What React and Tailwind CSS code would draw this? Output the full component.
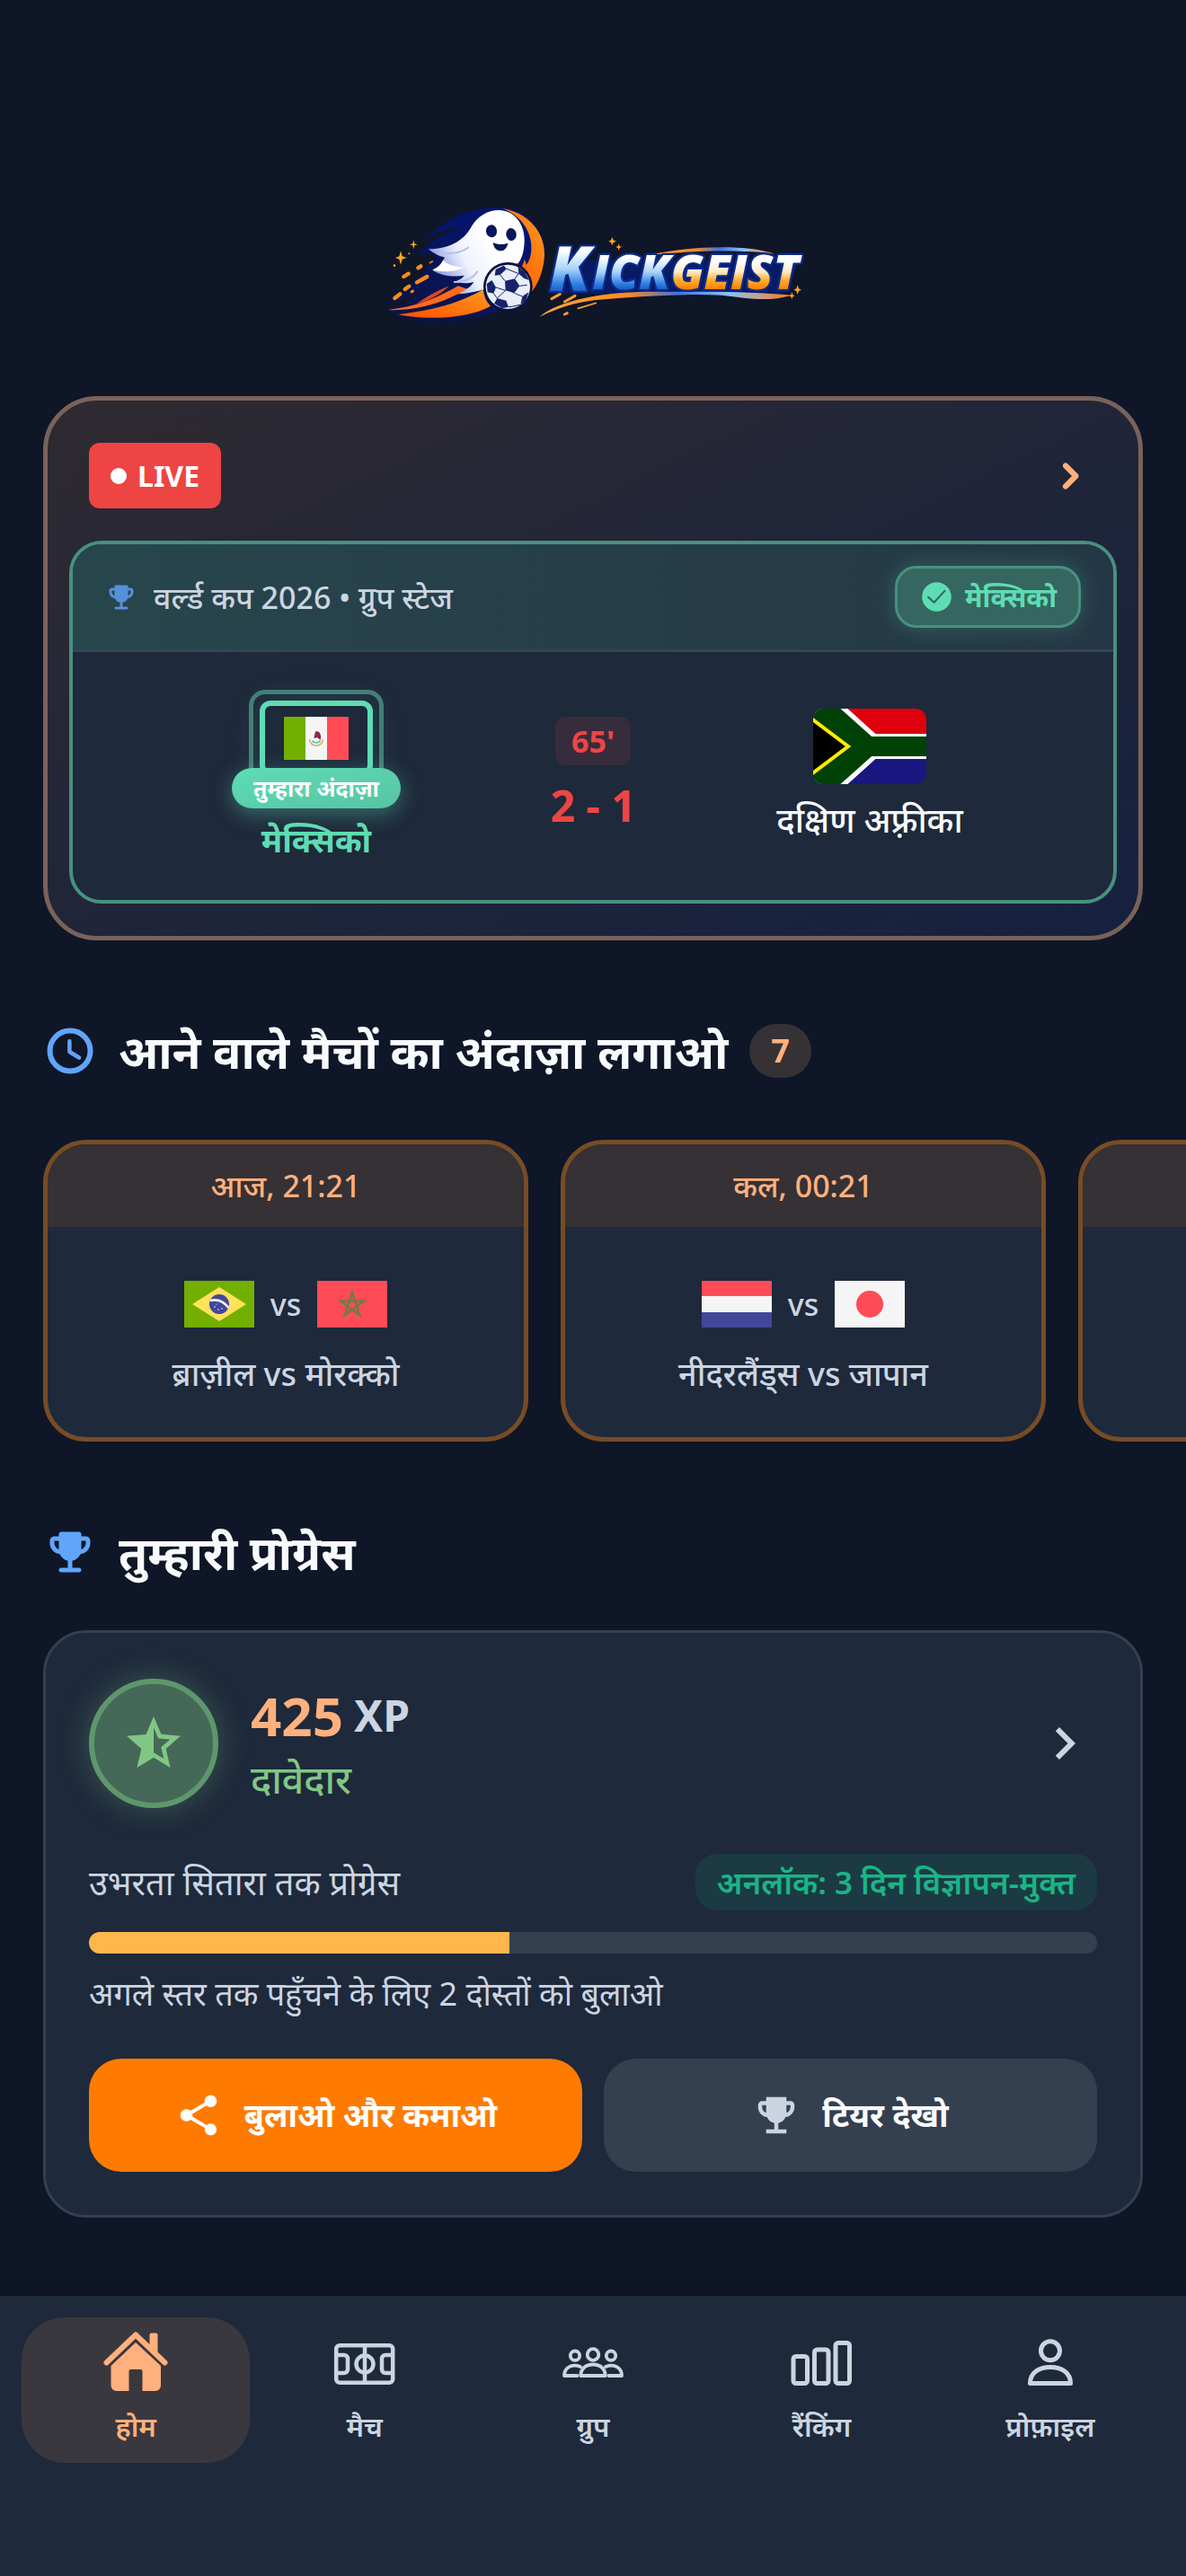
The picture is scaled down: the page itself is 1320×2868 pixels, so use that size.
import React, { useState } from 'react';
import { MdChevronRight, MdEmojiEvents, MdShare, MdStarHalf } from 'react-icons/md';

function Logo() {
  return (
    <svg viewBox="0 0 1500 510" className="w-[500px] h-[170px]" role="img" aria-label="Kickgeist">
      <defs>
        <linearGradient id="swoosh" x1="0" y1="1" x2="1" y2="0">
          <stop offset="0" stopColor="#ff4d00" />
          <stop offset="1" stopColor="#ff9d1c" />
        </linearGradient>
        <linearGradient id="navy" x1="0" y1="1" x2="1" y2="0">
          <stop offset="0" stopColor="#0b1440" />
          <stop offset="1" stopColor="#03157c" />
        </linearGradient>
        <linearGradient id="ghost" x1="0" y1="0.6" x2="0.6" y2="0.3">
          <stop offset="0" stopColor="#7f93d8" />
          <stop offset="0.5" stopColor="#eef2ff" />
          <stop offset="1" stopColor="#ffffff" />
        </linearGradient>
        <linearGradient id="blueLetters" x1="0" y1="0" x2="0" y2="1">
          <stop offset="0.3" stopColor="#ffffff" />
          <stop offset="0.52" stopColor="#a9d3fb" />
          <stop offset="0.7" stopColor="#2f80e4" />
          <stop offset="0.85" stopColor="#1746a8" />
        </linearGradient>
        <linearGradient id="orangeLetters" x1="0" y1="0" x2="0" y2="1">
          <stop offset="0.35" stopColor="#ffffff" />
          <stop offset="0.52" stopColor="#ffe9c2" />
          <stop offset="0.64" stopColor="#ffb02e" />
          <stop offset="0.8" stopColor="#ff7a00" />
        </linearGradient>
        <linearGradient id="streak" x1="0" y1="0" x2="1" y2="0">
          <stop offset="0" stopColor="#f6a54b" />
          <stop offset="0.35" stopColor="#ff8a1c" />
          <stop offset="0.55" stopColor="#3f74e0" />
          <stop offset="0.75" stopColor="#8cc4f7" />
          <stop offset="1" stopColor="#ff7a1a" />
        </linearGradient>
      </defs>

      {/* trails */}
      <path d="M440 64 C320 62 250 110 190 170 C250 140 270 130 300 128 C220 170 190 190 165 222 L230 215 C180 300 110 350 40 388 C100 380 150 360 200 330 C150 370 110 392 62 404 C120 450 250 470 420 412 C380 440 330 450 250 460 C420 462 560 330 588 220 C588 120 510 66 440 64Z" fill="url(#navy)" />
      <path d="M448 66 C540 82 590 150 588 225 C584 280 565 320 545 345 C545 310 540 285 520 262 C560 230 560 110 448 66Z" fill="url(#swoosh)" />
      <path d="M512 262 L522 236 L536 280Z" fill="#ff6a00" />
      <path d="M385 335 C320 375 230 405 100 420 C190 442 340 432 408 392 C388 372 384 350 385 335Z" fill="url(#swoosh)" />
      <path d="M300 325 C230 365 160 395 66 405 C150 410 250 385 330 335Z" fill="#ff6a1a" />
      <path d="M270 325 C220 345 190 365 160 385 C200 375 240 355 270 325Z" fill="#e0451c" />
      <g stroke="#ff8a1c" strokeWidth="13" strokeLinecap="round">
        <path d="M118 294 L134 284" /><path d="M166 265 L175 259" /><path d="M162 313 L196 294" />
        <path d="M122 336 L136 326" /><path d="M88 366 L106 352" />
        <path d="M144 345 L149 342" strokeWidth="8" /><path d="M205 248 L214 243" strokeWidth="5" />
      </g>

      {/* ghost */}
      <path d="M440 72 C490 75 522 120 521 175 C520 215 510 238 500 250 C440 260 400 290 388 335 C360 345 330 350 300 352 C330 335 345 325 352 312 C330 318 310 316 285 312 C300 306 315 300 320 290 C290 296 240 292 214 272 C235 262 245 250 255 230 C230 225 215 212 200 202 C270 200 320 175 345 125 C365 92 400 70 440 72Z" fill="url(#ghost)" />
      <path d="M214 272 C250 280 290 280 320 262 C290 262 262 256 250 238 C242 256 230 264 214 272Z" fill="#ffffff" />
      <path d="M285 312 C320 312 350 300 365 275 M240 214 C280 220 310 215 335 195" stroke="#b4c0e8" strokeWidth="6" fill="none" />
      <ellipse cx="411" cy="142" rx="18" ry="21" fill="#0b1559" transform="rotate(-8 411 142)" />
      <ellipse cx="477" cy="153" rx="17" ry="21" fill="#0b1559" transform="rotate(-8 477 153)" />
      <path d="M416 180 C432 188 450 188 466 182 C460 218 420 216 416 180Z" fill="#0b1559" />

      {/* ball */}
      <circle cx="466" cy="328" r="82" fill="#0a1242" />
      <circle cx="466" cy="328" r="74" fill="#e9eef9" />
      <g fill="#14236b">
        <path d="M456 308 L489 301 L505 325 L487 349 L458 340Z" />
        <path d="M425 270 L452 257 L462 268 L440 288 L422 290Z" />
        <path d="M500 262 L522 278 L536 305 L520 300 L502 284Z" />
        <path d="M395 318 L412 306 L426 330 L418 350 L398 346Z" />
        <path d="M430 366 L460 374 L468 396 L446 399 L420 384Z" />
        <path d="M514 360 L535 346 L526 374 L508 388Z" />
      </g>
      <path d="M440 288 L456 308 M502 284 L489 301 M505 325 L530 322 M487 349 L514 360 M458 340 L430 366 M426 330 L458 340 M462 268 L502 284 M418 350 L430 366 M468 396 L508 388" stroke="#14236b" strokeWidth="3" />

      {/* sparkles */}
      <g fill="#ffa51e">
        <path d="M108 208 L113 226 L128 231 L113 236 L108 254 L103 236 L90 231 L103 226Z" />
        <path d="M151 172 L154 184 L164 187 L154 190 L151 202 L148 190 L138 187 L148 184Z" />
        <circle cx="87" cy="257" r="4" /><circle cx="136" cy="217" r="3" />
        <path d="M814 162 L818 172 L828 176 L818 180 L814 190 L810 180 L802 176 L810 172Z" />
        <path d="M836 184 L839 192 L846 195 L839 198 L836 206 L833 198 L826 195 L833 192Z" />
        <path d="M1433 322 L1437 334 L1446 338 L1437 342 L1433 354 L1429 342 L1420 338 L1429 334Z" />
        <path d="M1414 346 L1417 355 L1424 358 L1417 361 L1414 370 L1411 361 L1404 358 L1411 355Z" />
      </g>

      {/* wordmark */}
      <path d="M650 240 L1440 240 L1390 350 L610 352Z" fill="#071a63" />
      <path d="M940 222 C1080 190 1260 185 1360 218 C1260 204 1080 206 940 222Z" fill="url(#streak)" />
      <path d="M572 428 C640 370 800 340 1000 345 C1150 342 1300 345 1415 356 C1330 380 1270 366 1180 356 C1040 350 900 360 760 372 C690 380 630 400 572 428Z" fill="url(#streak)" />
      <g stroke="#ff9a2a" strokeWidth="9" strokeLinecap="round">
        <path d="M612 368 L640 352" /><path d="M655 378 L690 358" /><path d="M655 420 L664 416" /><path d="M700 400 L760 382" strokeWidth="5" />
      </g>
      <g fontFamily="'Open Sans', 'Noto Sans', sans-serif" fontWeight="800" fontStyle="italic" stroke="#0c2a8c" strokeWidth="14" strokeLinejoin="round" paintOrder="stroke">
        <text x="604" y="342" fontSize="206" fill="url(#blueLetters)">K</text>
        <text x="748" y="336" fontSize="158" fill="url(#blueLetters)">ICK</text>
        <text x="1010" y="336" fontSize="158" fill="url(#orangeLetters)">GEIST</text>
      </g>
    </svg>
  );
}

function TrophyRounded({ className }) {
  return (
    <svg viewBox="0 0 24 24" fill="currentColor" className={className}>
      <path d="M19 5h-2V4c0-.55-.45-1-1-1H8c-.55 0-1 .45-1 1v1H5c-1.1 0-2 .9-2 2v1c0 2.55 1.92 4.63 4.39 4.94.63 1.5 1.98 2.63 3.61 2.96V19H8c-.55 0-1 .45-1 1s.45 1 1 1h8c.55 0 1-.45 1-1s-.45-1-1-1h-3v-3.1c1.63-.33 2.98-1.46 3.61-2.96C19.08 12.63 21 10.55 21 8V7c0-1.1-.9-2-2-2zM5 8V7h2v3.82C5.84 10.4 5 9.3 5 8zm14 0c0 1.3-.84 2.4-2 2.82V7h2v1z" />
    </svg>
  );
}

function ClockIcon({ className }) {
  return (
    <svg viewBox="0 0 24 24" fill="none" stroke="currentColor" className={className}>
      <circle cx="12" cy="12" r="9" strokeWidth="2.4" />
      <path d="M11.75 7.7v4.7l4.25 2.600" strokeWidth="1.8" strokeLinecap="round" strokeLinejoin="round" />
    </svg>
  );
}

function CheckBadge({ className }) {
  return (
    <svg viewBox="0 0 24 24" className={className}>
      <circle cx="12" cy="12" r="10" fill="currentColor" />
      <path d="M6.2 12.2l4 3.7 7.3-8" fill="none" stroke="#35665f" strokeWidth="1.3" strokeLinecap="round" strokeLinejoin="round" />
    </svg>
  );
}

function Flag({ code, className }) {
  return (
    <svg viewBox="0 0 78 52" preserveAspectRatio="none" className={className}>
      {code === 'mx' && (
        <>
          <rect width="78" height="52" fill="#f5f5f5" />
          <rect width="26" height="52" fill="#73af00" />
          <rect x="52" width="26" height="52" fill="#ff4b55" />
          <path d="M31 27a8 8 0 0 0 16 0" fill="none" stroke="#c9b44a" strokeWidth="1.6" />
          <path d="M34 29c3 3 7 3 10 0" fill="none" stroke="#5cc4c9" strokeWidth="2" />
          <path d="M38 18c4-2 8 3 6 10l-4-3-4 1 1-4z" fill="#8a2846" />
        </>
      )}
      {code === 'br' && (
        <>
          <rect width="78" height="52" fill="#73af00" />
          <path d="M39 7L69 26 39 45 9 26z" fill="#ffe15a" />
          <circle cx="39" cy="26" r="11" fill="#41479b" />
          <path d="M29 22c8-2 15 1 20.5 8" fill="none" stroke="#f5f5f5" strokeWidth="2.5" />
          <g fill="#f5f5f5">
            <circle cx="34" cy="29" r="0.8" /><circle cx="38" cy="32" r="0.8" /><circle cx="42" cy="31" r="0.8" /><circle cx="36" cy="26" r="0.6" />
          </g>
        </>
      )}
      {code === 'ma' && (
        <>
          <rect width="78" height="52" fill="#ff4b55" />
          <path d="M39 13l8.2 25L26 22.500h26L30.800 38z" fill="none" stroke="#73794a" strokeWidth="2.6" />
        </>
      )}
      {code === 'nl' && (
        <>
          <rect width="78" height="52" fill="#f5f5f5" />
          <rect width="78" height="17" fill="#ff4b55" />
          <rect y="35" width="78" height="17" fill="#41479b" />
        </>
      )}
      {code === 'jp' && (
        <>
          <rect width="78" height="52" fill="#f5f5f5" />
          <circle cx="39" cy="26" r="15" fill="#ff4b55" />
        </>
      )}
    </svg>
  );
}

function SouthAfricaFlag() {
  return (
    <svg viewBox="0 0 126 84" className="w-[126px] h-[84px] rounded-xl">
      <rect width="126" height="42" fill="#de000a" />
      <rect y="42" width="126" height="42" fill="#1a1880" />
      <path d="M0-16L64 42 0 100M64 42h62" fill="none" stroke="#fff" strokeWidth="28" />
      <path d="M-4-16L61 42-4 100M61 42h65" fill="none" stroke="#004106" strokeWidth="22" />
      <path d="M0-14L20 0 64 36v12L20 84 0 98z" fill="#004106" />
      <path d="M-2 11L39 42-2 73z" fill="#000" stroke="#ffec00" strokeWidth="4" />
    </svg>
  );
}

function HomeIcon() {
  return (
    <svg viewBox="0 0 72 72" className="size-[72px]">
      <path d="M3.5 35.5L36 4.5l32.5 31" fill="none" stroke="currentColor" strokeWidth="6" strokeLinecap="round" strokeLinejoin="round" />
      <path d="M51.5 17V4.5a2 2 0 0 1 2-2h5a2 2 0 0 1 2 2v21z" fill="currentColor" />
      <path d="M36 13L64 39v22a6 6 0 0 1-6 6H43.5V45a2 2 0 0 0-2-2h-11a2 2 0 0 0-2 2v22H14.5a6 6 0 0 1-6-6V39z" fill="currentColor" />
    </svg>
  );
}

function PitchIcon() {
  return (
    <svg viewBox="0 0 72 72" className="size-[72px]" fill="none" stroke="currentColor" strokeWidth="4.5">
      <rect x="4.2" y="16.2" width="63" height="41.6" rx="4" />
      <path d="M36 16v42" />
      <circle cx="36" cy="37" r="9.5" />
      <path d="M4 27h9a4 4 0 0 1 4 4v12a4 4 0 0 1-4 4H4M68 27h-9a4 4 0 0 0-4 4v12a4 4 0 0 0 4 4h9" />
    </svg>
  );
}

function GroupIcon() {
  return (
    <svg viewBox="0 0 72 72" className="size-[72px]" fill="none" stroke="currentColor" strokeWidth="3.8" strokeLinecap="round" strokeLinejoin="round">
      <circle cx="36" cy="26.5" r="6.3" />
      <circle cx="16" cy="27.7" r="5.2" />
      <circle cx="56" cy="27.7" r="5.2" />
      <path d="M22.3 50c0-8 6-12.5 13.7-12.5S49.7 42 49.7 50z" />
      <path d="M18.500 50H4c0-8 7-14 18-10M53.5 50H68c0-8-7-14-18-10" />
    </svg>
  );
}

function RankingIcon() {
  return (
    <svg viewBox="0 0 72 72" className="size-[72px]" fill="none" stroke="currentColor" strokeWidth="5">
      <rect x="5" y="28.5" width="15.5" height="30" rx="3" />
      <rect x="28.500" y="21" width="15.5" height="37.5" rx="3" />
      <rect x="52" y="13.5" width="15.5" height="45" rx="3" />
    </svg>
  );
}

function ProfileIcon() {
  return (
    <svg viewBox="0 0 72 72" className="size-[72px]" fill="none" stroke="currentColor" strokeWidth="5" strokeLinejoin="round">
      <circle cx="36" cy="22.3" r="10.5" />
      <path d="M13.5 58.5c0-12 10-18 22.5-18s22.5 6 22.5 18z" />
    </svg>
  );
}

const matches = [
  { time: 'आज, 21:21', home: 'br', away: 'ma', label: 'ब्राज़ील vs मोरक्को' },
  { time: 'कल, 00:21', home: 'nl', away: 'jp', label: 'नीदरलैंड्स vs जापान' },
];

const tabs = [
  { id: 'home', label: 'होम', Icon: HomeIcon },
  { id: 'matches', label: 'मैच', Icon: PitchIcon },
  { id: 'groups', label: 'ग्रुप', Icon: GroupIcon },
  { id: 'ranking', label: 'रैंकिंग', Icon: RankingIcon },
  { id: 'profile', label: 'प्रोफ़ाइल', Icon: ProfileIcon },
];

function LiveMatch() {
  return (
    <section className="mx-12 rounded-[60px] border-5 border-[#7a6259] bg-linear-to-br from-[#2f2a31] via-[#202539] to-[#16213f] px-6 pt-[47px] pb-9">
      <div className="flex items-center justify-between px-[22px]">
        <span className="flex h-[73px] items-center gap-3 rounded-xl bg-[#ef4444] px-6 text-[32px] font-bold text-white">
          <span className="size-[18px] rounded-full bg-white" />
          LIVE
        </span>
        <button type="button" className="text-[#ffb07c]">
          <svg viewBox="0 0 24 24" fill="currentColor" stroke="currentColor" strokeWidth="0.5" className="size-[60px]">
            <path d="M9.29 6.71c-.39.39-.39 1.02 0 1.41L13.17 12l-3.88 3.88c-.39.39-.39 1.02 0 1.41.39.39 1.02.39 1.41 0l4.59-4.59c.39-.39.39-1.02 0-1.41L10.7 6.7c-.38-.38-1.02-.38-1.41.01z" />
          </svg>
        </button>
      </div>

      <div className="mt-9 overflow-hidden rounded-[36px] border-4 border-[#47917f] bg-[#1e293b]">
        <div className="flex items-center justify-between border-b-3 border-[#334652] bg-linear-to-r from-[#27464c] to-[#253746] px-9 py-6">
          <div className="flex items-center gap-[18px] text-[34px] leading-[48px] font-medium text-[#cbd5e1]">
            <TrophyRounded className="size-9 text-[#5590d9]" />
            वर्ल्ड कप 2026 • ग्रुप स्टेज
          </div>
          <span className="flex h-[69px] items-center gap-3 rounded-3xl border-3 border-[#47917f] bg-[#35665f] px-6 text-[30px] font-bold text-[#5edcb3] shadow-[0_0_24px_#5edcb340]">
            <CheckBadge className="size-[39px]" />
            मेक्सिको
          </span>
        </div>

        <div className="flex items-center px-9 py-[39px]">
          <div className="flex flex-1 flex-col items-center pt-[15px]">
            <div className="relative flex h-[84px] w-[126px] items-center justify-center rounded-xl border-6 border-[#5edcb3] shadow-[0_0_36px_#5edcb326]">
              <div className="absolute -inset-[18px] rounded-[18px] border-5 border-[#427f76]" />
              <Flag code="mx" className="h-12 w-[72px]" />
              <span className="absolute top-[69px] rounded-3xl bg-linear-to-br from-[#5edcb3] to-[#57c4a4] px-6 text-[25px] leading-[45px] font-bold whitespace-nowrap text-white shadow-[0_6px_24px_#5edcb366]">
                तुम्हारा अंदाज़ा
              </span>
            </div>
            <p className="mt-[45px] text-4xl leading-[54px] font-bold text-[#5edcb3]">मेक्सिको</p>
          </div>

          <div className="flex w-[146px] flex-col items-center gap-3 font-bold text-[#ef4444]">
            <span className="rounded-xl bg-[#ef4444]/12 px-[18px] text-[34px] leading-[54px]">65'</span>
            <span className="text-5xl leading-[66px]">2 - 1</span>
          </div>

          <div className="flex flex-1 flex-col items-center gap-3">
            <SouthAfricaFlag />
            <p className="text-[38px] leading-[54px] font-medium text-[#f8fafc]">दक्षिण अफ़्रीका</p>
          </div>
        </div>
      </div>
    </section>
  );
}

function UpcomingMatches() {
  return (
    <section>
      <h2 className="mx-12 mt-[87px] flex h-[72px] items-center gap-6 text-[52px] font-bold text-[#f8fafc]">
        <ClockIcon className="size-[60px] text-[#60a5fa]" />
        आने वाले मैचों का अंदाज़ा लगाओ
        <span className="rounded-full bg-[#353135] px-6 text-4xl leading-[60px] text-[#ffb07c]">7</span>
      </h2>

      <div className="mt-[63px] flex gap-9 overflow-x-auto px-12 [scrollbar-width:none]">
        {matches.map((match) => (
          <article key={match.label} className="w-[540px] shrink-0 overflow-hidden rounded-[48px] border-5 border-[#774c25] bg-[#1e293b] text-center text-[34px] font-medium text-[#cbd5e1]">
            <div className="bg-[#353135] leading-[92px] text-[#ffb07c]">{match.time}</div>
            <div className="flex items-center justify-center gap-[18px] pt-[60px] leading-[52px]">
              <Flag code={match.home} className="h-[52px] w-[78px]" />
              vs
              <Flag code={match.away} className="h-[52px] w-[78px]" />
            </div>
            <p className="mt-7 mb-[46px] text-4xl leading-[48px]">{match.label}</p>
          </article>
        ))}
        <article className="w-[540px] shrink-0 overflow-hidden rounded-[48px] border-5 border-[#774c25] bg-[#1e293b]">
          <div className="h-[92px] bg-[#353135]" />
        </article>
      </div>
    </section>
  );
}

function Progress() {
  const percent = 41.7;

  return (
    <section className="mx-12">
      <h2 className="mt-[87px] flex h-[72px] items-center gap-6 text-[52px] font-bold text-[#f8fafc]">
        <TrophyRounded className="size-[60px] text-[#60a5fa]" />
        तुम्हारी प्रोग्रेस
      </h2>

      <div className="mt-[51px] rounded-[48px] border-3 border-[#334050] bg-[#1e293b] px-12 pt-[51px] pb-12">
        <div className="flex items-center">
          <div className="flex size-36 items-center justify-center rounded-full border-6 border-[#5f966c] bg-[#456858] text-[#81c784] shadow-[0_0_36px_#81c7844d]">
            <MdStarHalf className="size-[72px]" />
          </div>
          <div className="ml-9 flex flex-1 flex-col gap-2">
            <div className="flex items-center gap-3 font-bold">
              <span className="text-6xl leading-[72px] text-[#ffb07c]">425</span>
              <span className="text-5xl leading-[72px] text-[#cbd5e1]">XP</span>
            </div>
            <p className="text-[43px] leading-[54px] font-medium text-[#81c784]">दावेदार</p>
          </div>
          <button type="button" className="text-[#cbd5e1]">
            <MdChevronRight className="size-[72px]" />
          </button>
        </div>

        <div className="mt-[51px] flex items-center justify-between">
          <span className="text-[38px] leading-[63px] text-[#cbd5e1]">उभरता सितारा तक प्रोग्रेस</span>
          <span className="rounded-3xl bg-[#1c3a43] px-6 text-[35px] leading-[63px] font-semibold text-[#19b585]">अनलॉक: 3 दिन विज्ञापन-मुक्त</span>
        </div>
        <div className="mt-6 h-6 overflow-hidden rounded-xl bg-[#343f4f]">
          <div className="h-full bg-[#ffb74d]" style={{ width: `${percent}%` }} />
        </div>
        <p className="mt-[21px] text-4xl leading-[48px] text-[#cbd5e1]">अगले स्तर तक पहुँचने के लिए 2 दोस्तों को बुलाओ</p>

        <div className="mt-12 grid grid-cols-2 gap-6 text-4xl font-bold">
          <button type="button" className="flex h-[126px] items-center justify-center gap-6 rounded-[36px] bg-[#ff7b00] text-white">
            <MdShare className="size-[54px]" />
            बुलाओ और कमाओ
          </button>
          <button type="button" className="flex h-[126px] items-center justify-center gap-6 rounded-[36px] bg-[#343f4f] text-[#f8fafc]">
            <MdEmojiEvents className="size-[54px] text-[#cbd5e1]" />
            टियर देखो
          </button>
        </div>
      </div>
    </section>
  );
}

function TabBar() {
  const [active, setActive] = useState('home');

  return (
    <nav className="mt-auto flex bg-[#1e293b] px-6 pt-6 pb-[126px] shadow-[0_-6px_30px_#00000040]">
      {tabs.map(({ id, label, Icon }) => (
        <button
          key={id}
          type="button"
          onClick={() => setActive(id)}
          className={`flex h-[162px] flex-1 flex-col items-center rounded-[48px] pt-[15px] text-[31px] font-semibold ${
            active === id ? 'bg-[#3a383f] text-[#ffb07c]' : 'text-[#cbd5e1]'
          }`}
        >
          <Icon />
          <span className="mt-2.5 leading-[48px]">{label}</span>
        </button>
      ))}
    </nav>
  );
}

export default function App() {
  return (
    <div lang="hi" className="flex min-h-screen flex-col overflow-x-hidden bg-[#0e1628] font-['Noto_Sans',sans-serif]">
      <header className="flex justify-center pt-[210px] pb-[61px]">
        <Logo />
      </header>
      <main className="pb-[87px]">
        <LiveMatch />
        <UpcomingMatches />
        <Progress />
      </main>
      <TabBar />
    </div>
  );
}
